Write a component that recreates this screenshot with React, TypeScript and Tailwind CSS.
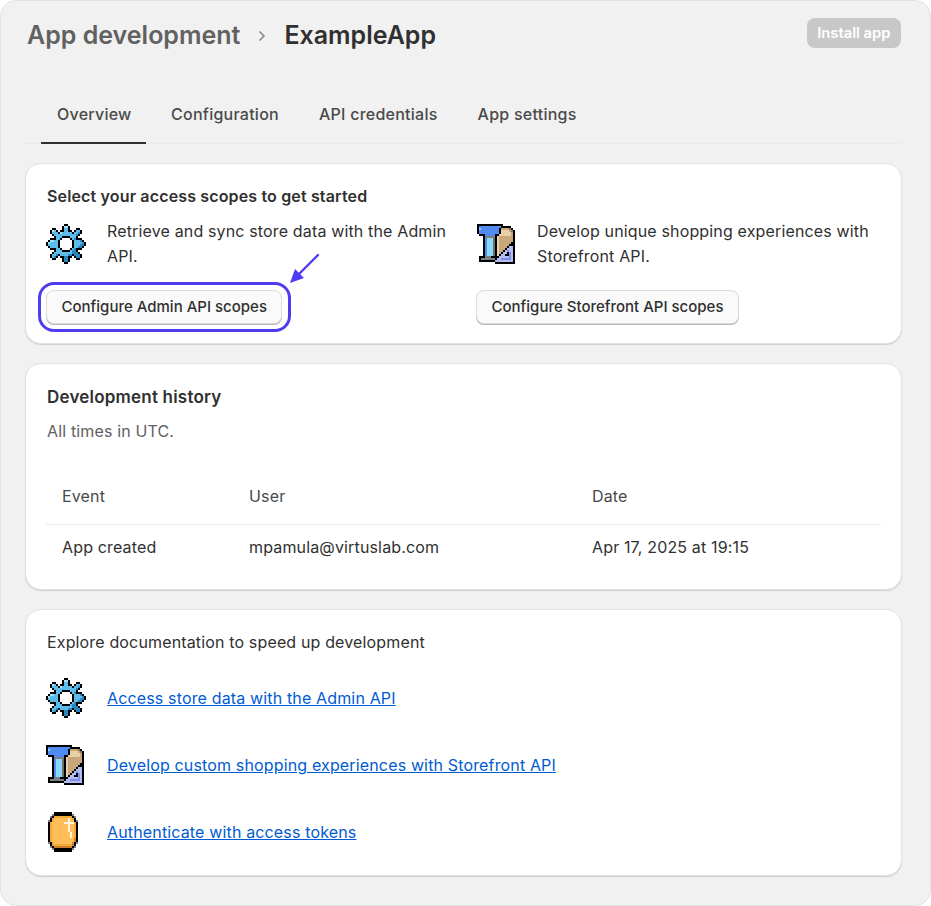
import React from "react";

const palette: Record<string, string> = {
  k: "#000000", g: "#7b7f86", b: "#5cbcec", l: "#a4e4fa", d: "#2a86bc", w: "#ffffff",
  B: "#4f8bf0", L: "#8ad8f8", t: "#c9a77c", T: "#e8d0a8", n: "#8a7358", v: "#7f8fe8", V: "#b4bcf4",
  o: "#f5a93a", O: "#ffbe58", y: "#fff4dc", r: "#c9802a", s: "#6e6e6e",
};

function Pixel({ rows, size, className }: { rows: string[]; size: number; className?: string }) {
  const w = rows[0].length;
  const h = rows.length;
  return (
    <svg width={w * size} height={h * size} viewBox={`0 0 ${w} ${h}`} shapeRendering="crispEdges" className={className}>
      {rows.flatMap((row, y) =>
        row.split("").map((c, x) =>
          c === "." ? null : <rect key={`${x}-${y}`} x={x} y={y} width={1} height={1} fill={palette[c]} />
        )
      )}
    </svg>
  );
}

const gear = [
  ".........kk.........",
  "........kllk........",
  "...kk...kbbk...kk...",
  "..klbk.kkbbkk.kbbk..",
  "..kbbbklbbbbbkbbdk..",
  "...kbbbbbbbbbbbdk...",
  "....kbbbkkkkbbbk....",
  "..kkkbbkwwwwkbdkkk..",
  ".kllbbkww..wwkbbbdk.",
  "klbbbbkw....wkbbbbdk",
  "kbbbbbkw....wkbbbddk",
  ".kbbbbkww..wwkbbddk.",
  "..kkkbbkwwwwkbdkkk..",
  "....kbbbkkkkbddk....",
  "...kbbbbbbbbbdddk...",
  "..kbbdkbbbbddkdddk..",
  "..kbdk.kkddkk.kddk..",
  "...kk...kddk...kk...",
  "........kddk........",
  ".........kk.........",
];

const store = [
  "kkkkkkkkkkkkk.......",
  "kBBBBBBBBBBBkkkkk...",
  "kLBBBBBBBBBkttttnk..",
  "kBBBBBBBBBBkTTTTtnk.",
  "kBBBBBBBBBBkTTTTTtk.",
  ".kkkBBBBBkkTTTTTTtk.",
  "...kgggggkTtttttttk.",
  "...kBLLLskTtttttttk.",
  "...kBLLLskTtttttttk.",
  "...kBLLLskTttttttkk.",
  "...kBLLLskTtttttkkk.",
  "...kBLLLskTttttkVVk.",
  "...kBLLLskTtttkVVVk.",
  "...kBLLLskTttkVvVVk.",
  "...kBLLLskTtkVVkvVk.",
  "...kBLLLskTkVVkkvVk.",
  ".kkkgggkkkkVVVVVvVk.",
  ".kgggggggkVVvvvvvVk.",
  ".kkkkkkkkVVVVVVVVVk.",
  ".........kkkkkkkkkk.",
];

const coin = [
  "...kkkkkkkkk...",
  "..gkkkkkkkkkg..",
  ".gkoooooooookg.",
  ".koOOOOOOOyOok.",
  "gkoOOOOOOOyOOkg",
  "koOOOOOOyyyyyok",
  "koOOOOOOOOyOOok",
  "koOOOOOOOOyOOok",
  "koOOOOOOOOyOOok",
  "koOOOOOOOOyOOok",
  "koOOOOOOOOOyOok",
  "koOOOOOOOOOyOok",
  "koOOOOOOOOOyOok",
  "koOOOOOOOOOOOrk",
  "koOOOOOOOOOOOrk",
  "gkoOOOOOOOOOrkg",
  ".koooooooooork.",
  ".gkrrrrrrrrrkg.",
  "..gkkkkkkkkkg..",
  "...kkkkkkkkk...",
];

function Btn({ children }: { children: React.ReactNode }) {
  return (
    <button className="h-[34px] px-[14.5px] rounded-lg bg-[#fafafa] border border-[#dcdcdc] shadow-[0_1px_0_#b5b5b5] text-[15px] font-medium tracking-normal text-[#303030]">
      {children}
    </button>
  );
}

function Card({ children, className }: { children: React.ReactNode; className?: string }) {
  return (
    <div className={`bg-white rounded-2xl border border-[#e3e3e3] shadow-[0_1px_1px_#cfcfcf] ${className ?? ""}`}>{children}</div>
  );
}

function DocLink({ rows, label, iconClass }: { rows: string[]; label: string; iconClass?: string }) {
  return (
    <div className="flex items-center h-[40px]">
      <div className="w-[61px] flex">
        <Pixel rows={rows} size={2} className={iconClass} />
      </div>
      <a className="text-[#005bd3] underline">{label}</a>
    </div>
  );
}

export default function App() {
  return (
    <div className="w-[931px] h-[906px] bg-white font-['Inter',sans-serif] text-[#303030] text-[16px] tracking-[0.15px]">
      <div className="h-full bg-[#f1f1f1] border border-[#e3e3e3] rounded-2xl pl-[24px] pr-[28px] pt-[17px]">
        <div className="flex items-start justify-between h-[60px] pr-px">
          <div className="flex items-center text-[25px] font-semibold h-[36px] pl-[2px] tracking-normal">
            <span className="text-[#616161]">App development</span>
            <svg width="12" height="12" viewBox="0 0 12 12" fill="none" className="mx-[16px]">
              <path d="M3.5 1.5 8 6l-4.5 4.5" stroke="#8a8a8a" strokeWidth="1.6" />
            </svg>
            <span>ExampleApp</span>
          </div>
          <button className="h-[30px] px-[10.5px] rounded-lg bg-[#c8c8c8] text-white text-[14.75px] font-semibold tracking-normal">Install app</button>
        </div>

        <div className="flex gap-2 pl-[16px] border-b border-[#ebebeb] h-[66px] items-end">
          {["Overview", "Configuration", "API credentials", "App settings"].map((t, i) => (
            <div
              key={t}
              className={`h-[48px] pt-[6px] font-medium tracking-[0.25px] text-[#4a4a4a] -mb-px border-b-2 ${i === 0 ? "w-[105px] pl-4 mr-px border-[#303030]" : "px-4 border-transparent"}`}
            >
              {t}
            </div>
          ))}
        </div>

        <div className="mt-[19px] flex flex-col gap-[19px]">
          <Card className="h-[181px] px-5 pt-[22px] relative">
            <div className="font-semibold leading-5 pl-px">Select your access scopes to get started</div>
            <div className="grid grid-cols-2 gap-[25px] mt-[13px]">
              <div>
                <div className="flex">
                  <Pixel rows={gear} size={2} className="mt-[5px] mr-[21px] shrink-0" />
                  <p className="leading-[25px]">Retrieve and sync store data with the Admin API.</p>
                </div>
                <div className="mt-[21px]"><Btn>Configure Admin API scopes</Btn></div>
              </div>
              <div>
                <div className="flex">
                  <Pixel rows={store} size={2} className="mt-[5px] ml-px mr-5 shrink-0" />
                  <p className="leading-[25px]">Develop unique shopping experiences with Storefront API.</p>
                </div>
                <div className="mt-[21px]"><Btn>Configure Storefront API scopes</Btn></div>
              </div>
            </div>
            <div className="absolute left-[12px] top-[118px] w-[253px] h-[50px] rounded-2xl border-[3px] border-[#4f3cf0]" />
            <svg width="32" height="32" viewBox="0 0 32 32" className="absolute left-[263px] top-[89px]" fill="none">
              <path d="M29 2 8 23" stroke="#4f3cf0" strokeWidth="2.4" strokeLinecap="round" />
              <path d="M1 30l5-14 9 9z" fill="#4f3cf0" />
            </svg>
          </Card>

          <Card className="h-[227px] px-5 pt-[21px]">
            <div className="text-[17px] font-semibold leading-6 tracking-[0.2px] pl-px">Development history</div>
            <div className="mt-[10px] text-[#616161] leading-6 pl-px">All times in UTC.</div>
            <div className="mt-[25px] grid grid-cols-[187px_343px_1fr] pl-[16px] h-[57px] items-center border-b border-[#ebebeb] text-[#4a4a4a]">
              <div>Event</div>
              <div>User</div>
              <div>Date</div>
            </div>
            <div className="grid grid-cols-[187px_343px_1fr] pl-[16px] h-[44px] items-center">
              <div>App created</div>
              <div>mpamula@virtuslab.com</div>
              <div>Apr 17, 2025 at 19:15</div>
            </div>
          </Card>

          <Card className="h-[267px] px-5 pt-[20px]">
            <div className="leading-6 pl-px">Explore documentation to speed up development</div>
            <div className="flex flex-col gap-[27px] mt-[24px]">
              <DocLink rows={gear} label="Access store data with the Admin API" />
              <DocLink rows={store} label="Develop custom shopping experiences with Storefront API" />
              <DocLink rows={coin} label="Authenticate with access tokens" iconClass="ml-[2px] -mr-[2px]" />
            </div>
          </Card>
        </div>
      </div>
    </div>
  );
}
